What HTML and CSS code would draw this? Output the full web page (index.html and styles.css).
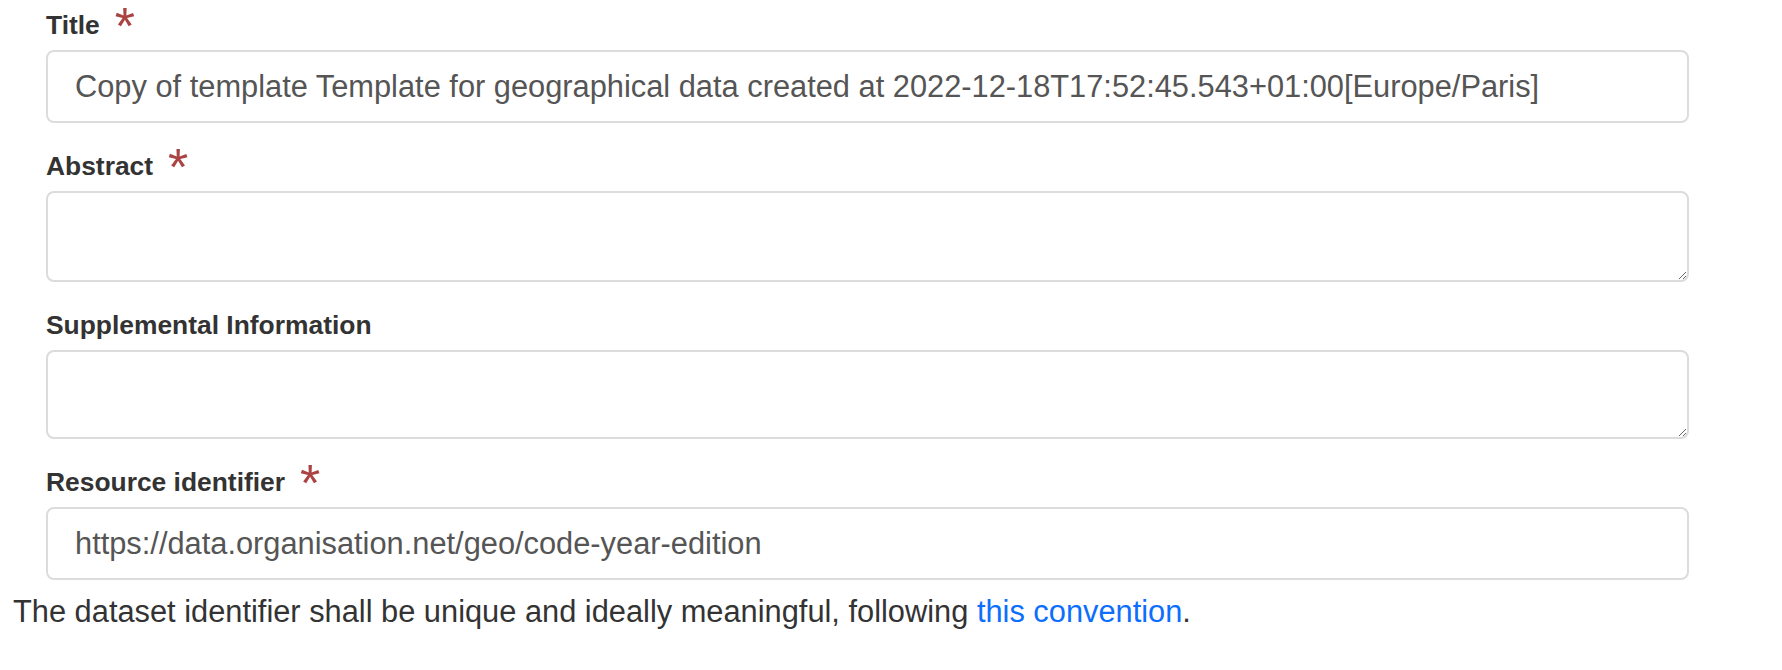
FILE: index.html
```html
<!DOCTYPE html>
<html lang="en">
<head>
<meta charset="utf-8">
<title>Metadata form</title>
<link rel="stylesheet" href="styles.css">
</head>
<body>
<div class="page">
  <div class="fields">
    <div class="group">
      <label class="label" for="title">Title<span class="req">*</span></label>
      <input class="control" id="title" type="text" value="Copy of template Template for geographical data created at 2022-12-18T17:52:45.543+01:00[Europe/Paris]">
    </div>
    <div class="group">
      <label class="label" for="abstract">Abstract<span class="req">*</span></label>
      <textarea class="control area area-abstract" id="abstract"></textarea>
    </div>
    <div class="group">
      <label class="label" for="supp">Supplemental Information</label>
      <textarea class="control area area-supp" id="supp"></textarea>
    </div>
    <div class="group last">
      <label class="label" for="ident">Resource identifier<span class="req">*</span></label>
      <input class="control" id="ident" type="text" value="https://data.organisation.net/geo/code-year-edition">
    </div>
  </div>
  <p class="help">The dataset identifier shall be unique and ideally meaningful, following <a class="link" href="#">this convention</a>.</p>
</div>
</body>
</html>
```

FILE: styles.css
```css
html, body {
  margin: 0;
  padding: 0;
  background: #ffffff;
}

body {
  font-family: "Liberation Sans", Arial, Helvetica, sans-serif;
  color: #333333;
}

.page {
  padding: 10px 0 0 13px;
}

.fields {
  margin-left: 33px;
  width: 1643px;
  display: flex;
  flex-direction: column;
  gap: 28px;
}

.group {
  display: flex;
  flex-direction: column;
}

.label {
  display: block;
  font-size: 26.4px;
  font-weight: bold;
  line-height: 30px;
  height: 30px;
  margin-bottom: 10px;
  color: #333333;
}

.req {
  display: inline-block;
  color: #a94442;
  font-weight: normal;
  font-size: 52px;
  line-height: 0;
  vertical-align: -10px;
  margin-left: 15px;
}

.control {
  display: block;
  box-sizing: border-box;
  width: 100%;
  height: 73px;
  margin: 0;
  border: 2px solid #dcdcdc;
  border-radius: 8px;
  padding: 0 26px 0 27px;
  font-family: "Liberation Sans", Arial, Helvetica, sans-serif;
  font-size: 30.8px;
  color: #555555;
  background: #ffffff;
  outline: none;
}

.area {
  padding: 12px 26px 12px 27px;
  resize: vertical;
}

.area-abstract {
  height: 91px;
}

.area-supp {
  height: 89px;
}

.help {
  margin: 11px 0 0 0;
  font-size: 30.8px;
  line-height: 42px;
  color: #333333;
}

.link {
  color: #0d6efd;
  text-decoration: none;
}
```
